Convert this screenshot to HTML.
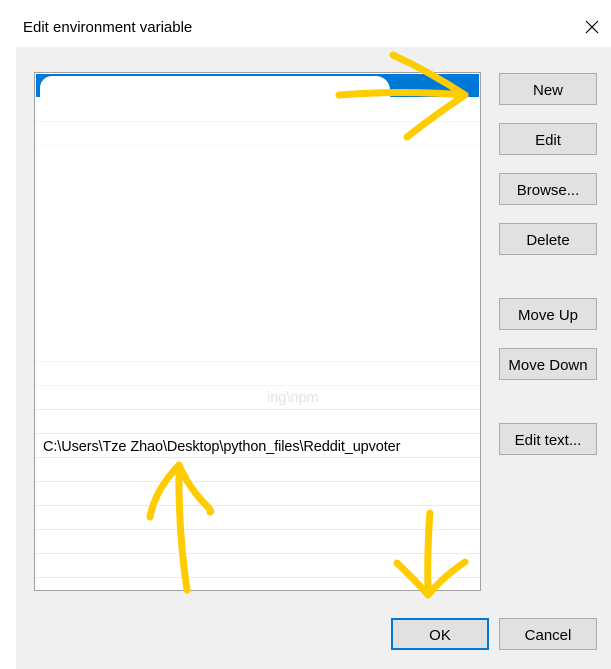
<!DOCTYPE html>
<html><head><style>
body{margin:0;width:611px;height:669px;background:#fff;position:relative;overflow:hidden;font-family:"Liberation Sans",sans-serif;}
.t{position:absolute;left:23px;top:19px;font-size:15px;color:#000;}
.x{position:absolute;left:583px;top:18px;}
.panel{position:absolute;left:16px;top:47px;width:595px;height:622px;background:#f0f0f0;}
.list{position:absolute;left:34px;top:72px;width:445px;height:517px;border:1px solid #a0a0a0;background:#fff;overflow:hidden;}
.line{position:absolute;left:0;width:445px;height:1px;background:#ececec;}
.btn{position:absolute;left:499px;width:96px;height:30px;border:1px solid #adadad;background:#e1e1e1;font-size:15px;text-align:center;line-height:33px;color:#000;}
</style></head><body>
<div class="t">Edit environment variable</div>
<svg class="x" width="18" height="18"><path d="M3 3L15 15M15 3L3 15" stroke="#000" stroke-width="1.2"/></svg>
<div class="panel"></div>
<div class="list">
<div style="position:absolute;left:1px;top:1px;width:443px;height:23px;background:#0078d7"></div>
<div style="position:absolute;left:5px;top:3px;width:350px;height:40px;background:#fff;border-radius:12px 14px 0 0"></div>
<div style="position:absolute;left:0;top:24px;width:445px;height:420px;background:#fff"></div>
<div class="line" style="top:48px;opacity:.6"></div><div class="line" style="top:72px;opacity:.4"></div>
<div class="line" style="top:288px;opacity:.5"></div><div class="line" style="top:312px;opacity:.6"></div>
<div class="line" style="top:336px"></div><div class="line" style="top:360px"></div>
<div class="line" style="top:384px"></div><div class="line" style="top:408px"></div>
<div class="line" style="top:432px"></div><div class="line" style="top:456px"></div>
<div class="line" style="top:480px"></div><div class="line" style="top:504px"></div>
<div style="position:absolute;left:232px;top:317px;font-size:14.5px;color:#e4e4e4">ing\npm</div>
<div style="position:absolute;left:8px;top:366px;font-size:14.5px;color:#000;letter-spacing:-0.1px">C:\Users\Tze Zhao\Desktop\python_files\Reddit_upvoter</div>
</div>
<div class="btn" style="top:73px">New</div>
<div class="btn" style="top:123px">Edit</div>
<div class="btn" style="top:173px">Browse...</div>
<div class="btn" style="top:223px">Delete</div>
<div class="btn" style="top:298px">Move Up</div>
<div class="btn" style="top:348px">Move Down</div>
<div class="btn" style="top:423px">Edit text...</div>
<div class="btn" style="top:618px;left:391px;width:94px;height:28px;line-height:31px;border:2px solid #0078d7">OK</div>
<div class="btn" style="top:618px">Cancel</div>
<svg style="position:absolute;left:0;top:0" width="611" height="669">
<g fill="none" stroke="#ffcc00" stroke-width="7" stroke-linecap="round" stroke-linejoin="round">
<path d="M339 95Q400 90 465 95"/>
<path d="M393 55Q430 72 465 95Q435 115 407 137"/>
<path d="M187 590Q178 530 179 465"/>
<path d="M150 517Q155 490 179 465Q190 490 208 507Q212 512 210 512"/>
<path d="M430 513Q427 550 428 595"/>
<path d="M397 563Q415 580 428 595Q445 575 465 562"/>
</g></svg>
</body></html>
